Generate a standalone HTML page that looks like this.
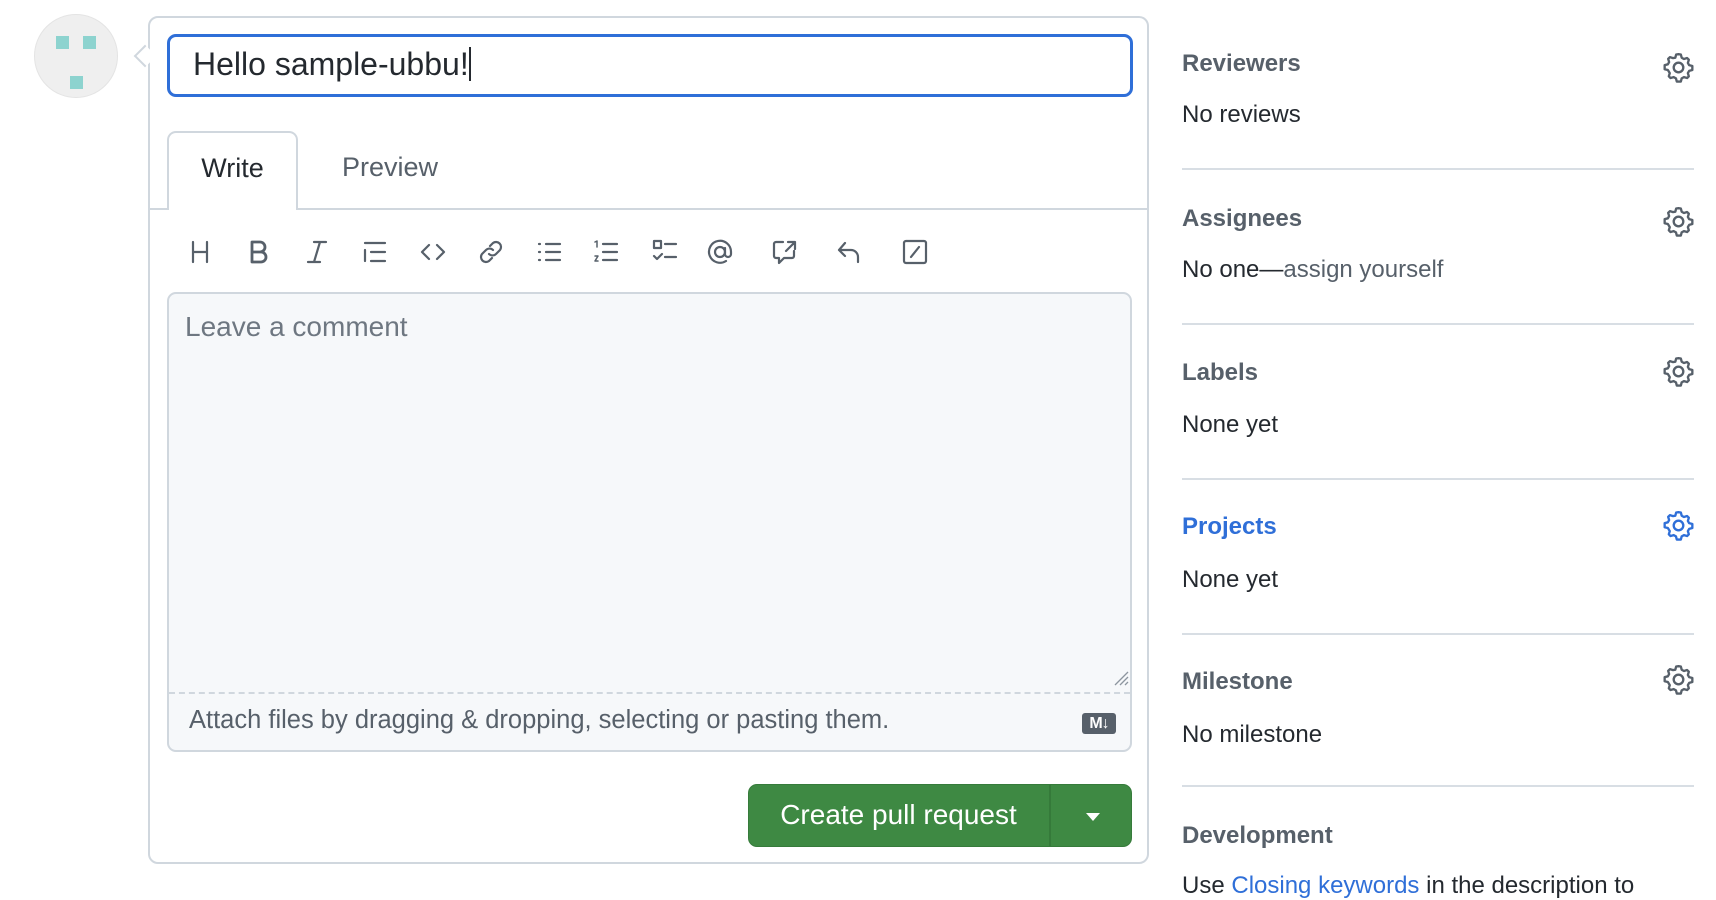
<!DOCTYPE html>
<html><head><meta charset="utf-8"><style>
*{box-sizing:border-box;margin:0;padding:0}
body{width:1716px;height:896px;overflow:hidden;background:#fff;font-family:"Liberation Sans",sans-serif;color:#24292f;position:relative}
.a{position:absolute}
.ic{position:absolute;top:237px;width:30px;height:30px}
.ic svg{width:30px;height:30px;fill:none;stroke:#57606a;stroke-width:2.2;stroke-linecap:round;stroke-linejoin:round}
.h{position:absolute;left:1182px;font-weight:bold;font-size:24px;color:#57606a;line-height:28px}
.b{position:absolute;left:1182px;font-size:24px;line-height:28px;color:#24292f}
.sep{position:absolute;left:1182px;width:512px;height:2px;background:#d8dee4}
.g{position:absolute;left:1662px;width:33px;height:33px}
</style></head><body>
<div class="a" style="left:34px;top:14px;width:84px;height:84px;border-radius:50%;background:#efefef;border:1px solid #e4e4e4"></div>
<div class="a" style="left:56px;top:36px;width:13px;height:13px;background:#8dd3cf"></div>
<div class="a" style="left:83px;top:36px;width:13px;height:13px;background:#8dd3cf"></div>
<div class="a" style="left:70px;top:76px;width:13px;height:13px;background:#8dd3cf"></div>

<div class="a" style="left:148px;top:16px;width:1001px;height:848px;border:2px solid #d0d7de;border-radius:10px"></div>
<div class="a" style="left:137px;top:48px;width:16px;height:16px;background:#fff;border-left:2px solid #d0d7de;border-bottom:2px solid #d0d7de;transform:rotate(45deg)"></div>

<div class="a" style="left:167px;top:34px;width:966px;height:63px;border:3px solid #2f6fd8;border-radius:9px;font-size:32px;line-height:54px;padding-left:23px">Hello sample-ubbu!<span style="display:inline-block;width:2px;height:34px;background:#24292f;vertical-align:-6px"></span></div>

<div class="a" style="left:150px;top:208px;width:997px;height:2px;background:#d0d7de"></div>
<div class="a" style="left:167px;top:131px;width:131px;height:79px;border:2px solid #d0d7de;border-bottom:none;border-radius:9px 9px 0 0;background:#fff;font-size:27px;line-height:70px;text-align:center">Write</div>
<div class="a" style="left:342px;top:131px;font-size:27px;line-height:72px;color:#57606a">Preview</div>

<div class="ic" style="left:185px"><svg viewBox="0 0 30 30"><path d="M8 5v20M22 5v20M8 15h14"/></svg></div>
<div class="ic" style="left:243px"><svg viewBox="0 0 30 30" style="stroke-width:2.8"><path d="M9 5h8a5 5 0 0 1 0 10H9zM9 15h9a5 5 0 0 1 0 10H9z"/></svg></div>
<div class="ic" style="left:302px"><svg viewBox="0 0 30 30"><path d="M12 5h12M6 25h12M18 5l-6 20"/></svg></div>
<div class="ic" style="left:360px"><svg viewBox="0 0 30 30"><path d="M5 6h20M11 15h14M11 24h14M5 13v11"/></svg></div>
<div class="ic" style="left:418px"><svg viewBox="0 0 30 30"><path d="M11 8l-7 7 7 7M19 8l7 7-7 7"/></svg></div>
<div class="ic" style="left:476px"><svg viewBox="0 0 30 30"><path d="M14 9l3-3a5 5 0 0 1 7 7l-4 4a5 5 0 0 1-7 0M16 21l-3 3a5 5 0 0 1-7-7l4-4a5 5 0 0 1 7 0"/></svg></div>
<div class="ic" style="left:534px"><svg viewBox="0 0 30 30"><path d="M12 7h14M12 15h14M12 23h14M5 7h1M5 15h1M5 23h1"/></svg></div>
<div class="ic" style="left:591px"><svg viewBox="0 0 30 30"><path d="M12 7h14M12 15h14M12 23h14" /><path d="M4 5l2-1v6M4 19h3l-3 5h3" style="stroke-width:1.5"/></svg></div>
<div class="ic" style="left:650px"><svg viewBox="0 0 30 30"><rect x="4" y="4" width="7" height="7"/><path d="M15 7h11M15 20h11M4 19l3 3 5-5"/></svg></div>
<div class="ic" style="left:705px"><svg viewBox="0 0 30 30"><circle cx="15" cy="15" r="5"/><path d="M20 11v6a3 3 0 0 0 6 0v-2a11 11 0 1 0-5 9"/></svg></div>
<div class="ic" style="left:770px"><svg viewBox="0 0 30 30"><path d="M13 5H6a2 2 0 0 0-2 2v12a2 2 0 0 0 2 2h3v5l5-5h8a2 2 0 0 0 2-2v-5M18 5h7v7M25 5l-9 9"/></svg></div>
<div class="ic" style="left:834px"><svg viewBox="0 0 30 30"><path d="M11 6L5 13l6 6M5 13h12a7 7 0 0 1 7 7v5"/></svg></div>
<div class="ic" style="left:900px"><svg viewBox="0 0 30 30"><rect x="4" y="4" width="22" height="22" rx="2"/><path d="M19 10l-8 10"/></svg></div>

<div class="a" style="left:167px;top:292px;width:965px;height:460px;border:2px solid #d0d7de;border-radius:9px;background:#f6f8fa"></div>
<div class="a" style="left:185px;top:311px;font-size:28px;color:#6e7781">Leave a comment</div>
<svg class="a" style="left:1113px;top:670px" width="16" height="16"><path d="M15 2L2 15M15 7L7 15M15 12L12 15" stroke="#8c959f" stroke-width="1.3"/></svg>
<div class="a" style="left:169px;top:692px;width:961px;border-top:2px dashed #d0d7de"></div>
<div class="a" style="left:189px;top:706px;font-size:25.5px;color:#57606a">Attach files by dragging &amp; dropping, selecting or pasting them.</div>
<div class="a" style="left:1082px;top:713px;width:34px;height:21px;background:#57606a;border-radius:3px;color:#fff;font-weight:bold;font-size:16px;line-height:21px;text-align:center;letter-spacing:-1px">M↓</div>

<div class="a" style="left:748px;top:784px;width:384px;height:63px;background:#3e8943;border-radius:9px;border:1px solid #367b3b"></div>
<div class="a" style="left:1049px;top:785px;width:2px;height:61px;background:#357a3a"></div>
<div class="a" style="left:748px;top:784px;width:301px;height:63px;color:#fff;font-size:28px;line-height:62px;text-align:center">Create pull request</div>
<div class="a" style="left:1086px;top:813px;width:0;height:0;border-left:7px solid transparent;border-right:7px solid transparent;border-top:8px solid #fff"></div>

<div class="h" style="top:50px">Reviewers</div>
<div class="b" style="top:101px">No reviews</div>
<div class="sep" style="top:168px"></div>
<div class="h" style="top:205px">Assignees</div>
<div class="b" style="top:256px">No one—<span style="color:#57606a">assign yourself</span></div>
<div class="sep" style="top:323px"></div>
<div class="h" style="top:359px">Labels</div>
<div class="b" style="top:411px">None yet</div>
<div class="sep" style="top:478px"></div>
<div class="h" style="top:513px;color:#2f6fd8">Projects</div>
<div class="b" style="top:566px">None yet</div>
<div class="sep" style="top:633px"></div>
<div class="h" style="top:668px">Milestone</div>
<div class="b" style="top:721px">No milestone</div>
<div class="sep" style="top:785px"></div>
<div class="h" style="top:822px">Development</div>
<div class="b" style="top:872px">Use <span style="color:#2f6fd8">Closing keywords</span> in the description to</div>

<svg style="display:none"><defs><g id="gear"><path d="M15 3l2.2.3.8 3 2.1 1.2 3-.9 1.6 1.6-.9 3L25 13.3l3 .8v3.8l-3 .8-1.2 2.1.9 3-1.6 1.6-3-.9-2.1 1.2-.8 3h-3.8l-.8-3-2.1-1.2-3 .9-1.6-1.6.9-3L5 17.9l-3-.8v-3.8l3-.8 1.2-2.1-.9-3 1.6-1.6 3 .9L12 6.3l.8-3z" fill="none" stroke-width="2.2" stroke-linejoin="round"/><circle cx="15" cy="15.5" r="4.5" fill="none" stroke-width="2.2"/></g></defs></svg>
<svg class="g" style="top:51px" viewBox="0 0 30 31" stroke="#57606a"><use href="#gear"/></svg>
<svg class="g" style="top:205px" viewBox="0 0 30 31" stroke="#57606a"><use href="#gear"/></svg>
<svg class="g" style="top:355px" viewBox="0 0 30 31" stroke="#57606a"><use href="#gear"/></svg>
<svg class="g" style="top:509px" viewBox="0 0 30 31" stroke="#2f6fd8"><use href="#gear"/></svg>
<svg class="g" style="top:663px" viewBox="0 0 30 31" stroke="#57606a"><use href="#gear"/></svg>
</body></html>
